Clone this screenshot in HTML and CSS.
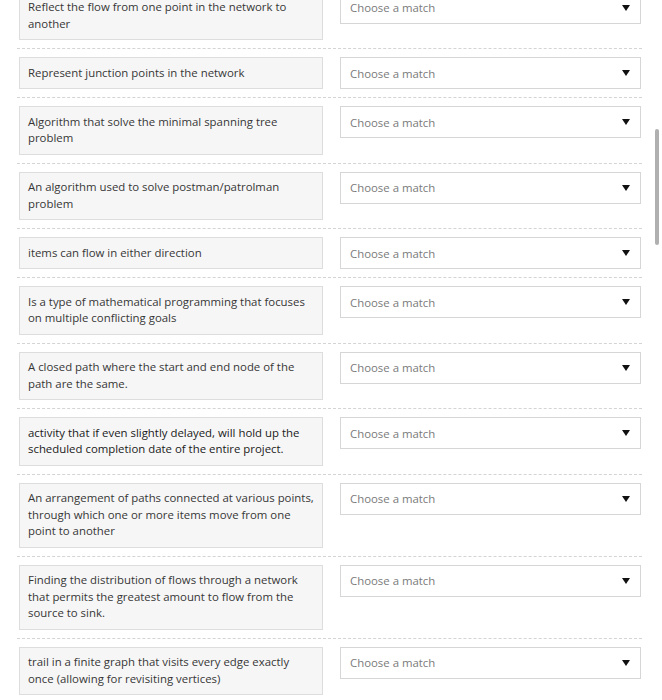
FILE: index.html
```html
<!DOCTYPE html>
<html lang="en">
<head>
<meta charset="utf-8">
<title>Matching</title>
<link rel="stylesheet" href="styles.css">
</head>
<body>
<div class="list">
  <div class="row"><div class="prompt">Reflect the flow from one point in the network to another</div><div class="select"><span class="placeholder">Choose a match</span><span class="caret"></span></div></div>
  <div class="row"><div class="prompt">Represent junction points in the network</div><div class="select"><span class="placeholder">Choose a match</span><span class="caret"></span></div></div>
  <div class="row"><div class="prompt">Algorithm that solve the minimal spanning tree problem</div><div class="select"><span class="placeholder">Choose a match</span><span class="caret"></span></div></div>
  <div class="row"><div class="prompt">An algorithm used to solve postman/patrolman problem</div><div class="select"><span class="placeholder">Choose a match</span><span class="caret"></span></div></div>
  <div class="row"><div class="prompt">items can flow in either direction</div><div class="select"><span class="placeholder">Choose a match</span><span class="caret"></span></div></div>
  <div class="row"><div class="prompt">Is a type of mathematical programming that focuses on multiple conflicting goals</div><div class="select"><span class="placeholder">Choose a match</span><span class="caret"></span></div></div>
  <div class="row"><div class="prompt">A closed path where the start and end node of the path are the same.</div><div class="select"><span class="placeholder">Choose a match</span><span class="caret"></span></div></div>
  <div class="row"><div class="prompt prompt-strong">activity that if even slightly delayed, will hold up the scheduled completion date of the entire project.</div><div class="select"><span class="placeholder">Choose a match</span><span class="caret"></span></div></div>
  <div class="row"><div class="prompt">An arrangement of paths connected at various points, through which one or more items move from one point to another</div><div class="select"><span class="placeholder">Choose a match</span><span class="caret"></span></div></div>
  <div class="row"><div class="prompt">Finding the distribution of flows through a network that permits the greatest amount to flow from the source to sink.</div><div class="select"><span class="placeholder">Choose a match</span><span class="caret"></span></div></div>
  <div class="row"><div class="prompt">trail in a finite graph that visits every edge exactly once (allowing for revisiting vertices)</div><div class="select"><span class="placeholder">Choose a match</span><span class="caret"></span></div></div>
</div>
<div class="scrollbar"></div>
</body>
</html>
```
FILE: styles.css
```css
html, body {
  margin: 0;
  padding: 0;
  background: #ffffff;
  overflow: hidden;
}
body {
  font-family: "Open Sans", "Liberation Sans", sans-serif;
  font-size: 11.4px;
  color: #363636;
}
.list {
  margin: -16.5px 0 0 17px;
  width: 625px;
}
.row {
  display: flex;
  align-items: flex-start;
  gap: 17px;
  padding: 8px 1px 8px 2px;
  border-bottom: 1px dashed #d4d4d4;
}
.prompt {
  width: 286px;
  flex: none;
  background: #f6f6f6;
  border: 1px solid #dddddd;
  padding: 6.75px 8px;
  line-height: 16.5px;
}
.prompt-strong {
  color: #1a1a1a;
}
.select {
  flex: 1;
  height: 30px;
  border: 1px solid #d6d6d6;
  background: #ffffff;
  display: flex;
  align-items: center;
  justify-content: space-between;
  padding: 0 10px 0 9px;
}
.placeholder {
  color: #7a7a7a;
}
.caret {
  width: 0;
  height: 0;
  border-left: 4.5px solid transparent;
  border-right: 4.5px solid transparent;
  border-top: 6px solid #111111;
}
.scrollbar {
  position: fixed;
  left: 655px;
  top: 129px;
  width: 4px;
  height: 116px;
  border-radius: 2px;
  background: #b0b0b0;
}
```
